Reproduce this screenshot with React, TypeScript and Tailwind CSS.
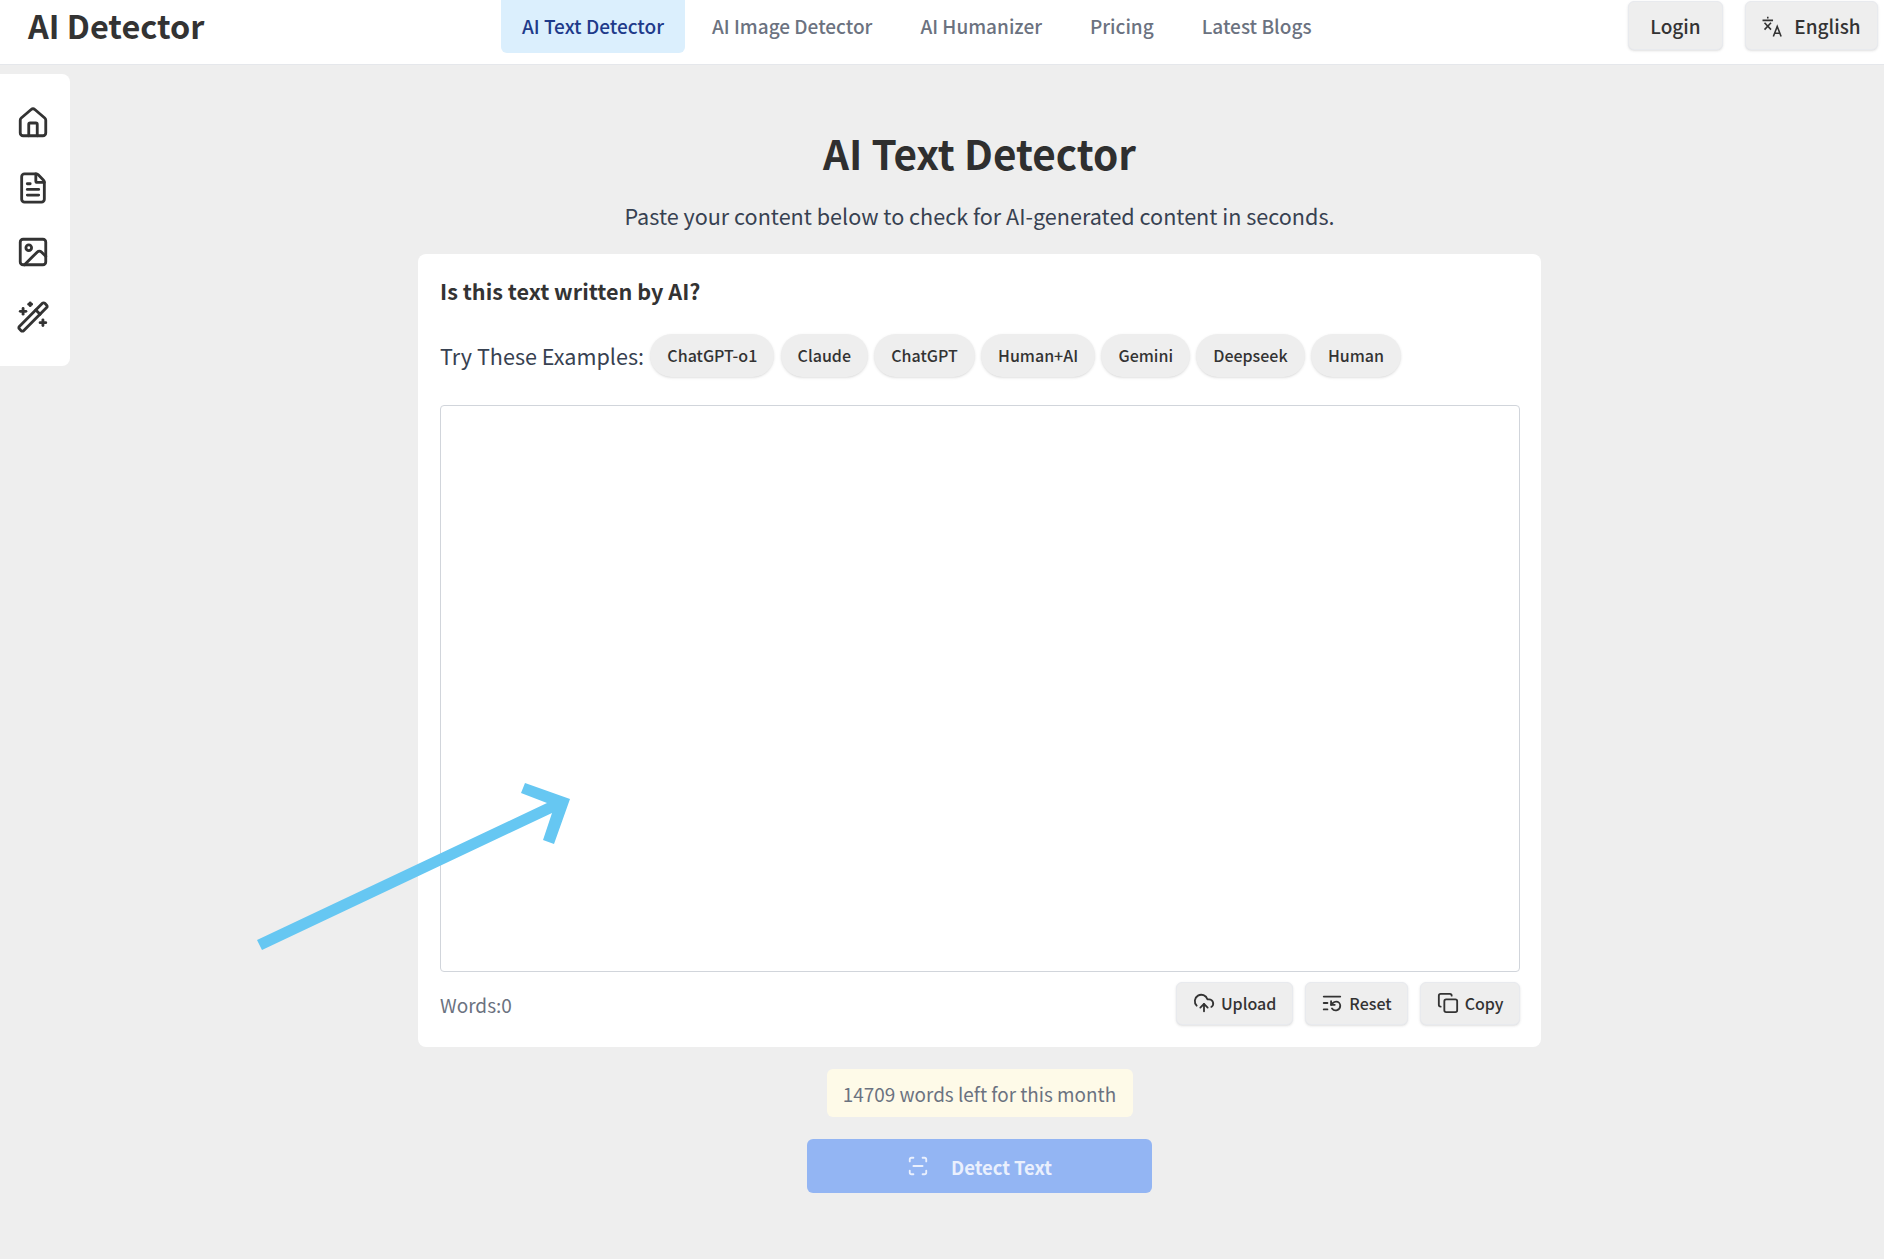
import { Copy, CloudUpload, FileText, House, Image, ListRestart, ScanLine, WandSparkles } from "lucide-react";

const tabs = ["AI Image Detector", "AI Humanizer", "Pricing", "Latest Blogs"];
const examples = ["ChatGPT-o1", "Claude", "ChatGPT", "Human+AI", "Gemini", "Deepseek", "Human"];

function TranslateIcon() {
  return (
    <svg viewBox="0 0 20 20" className="h-[21px] w-[21px]" fill="none" stroke="currentColor" strokeWidth="1.5">
      <path d="M0.5 4.2h10M5.5 0.8v1.6M2.4 6.4l6.2 6.6M8.6 6.4l-6.2 6.6" />
      <path d="M10.8 19.5l3.7-9.5 3.7 9.5M12 16.5h5" />
    </svg>
  );
}

function ToolButton({ icon, label }: { icon: React.ReactNode; label: string }) {
  return (
    <button className="flex h-[43px] items-center justify-center gap-[6px] rounded-md border border-[#e8eaee] bg-[#eeeeee] px-[15.5px] pb-[2px] text-[16px] font-medium text-[#333] shadow-sm">
      {icon}
      {label}
    </button>
  );
}

export default function App() {
  return (
    <div className="relative flex min-h-[1259px] flex-col overflow-hidden bg-[#eeeeee] font-['Noto_Sans_CJK_SC','Noto_Sans',sans-serif] text-[#333]">
      <header className="flex h-[65px] items-start border-b border-[#e5e7eb] bg-white">
        <div className="flex h-[51px] w-[501px] items-center pl-[28px] text-[32.4px] font-bold text-[#333]">AI Detector</div>
        <nav className="flex gap-[6px] text-[19px] font-medium text-[#6b7280]">
          <a className="flex h-[53px] items-center rounded-b-md bg-[#dbeffd] px-[21px] text-[#1e3a8a]">AI Text Detector</a>
          {tabs.map((t) => (
            <a key={t} className="flex h-[53px] items-center px-[21px]">
              {t}
            </a>
          ))}
        </nav>
        <div className="ml-auto flex gap-[22px] pt-[1px] pr-[6px] text-[19px] font-medium text-[#333]">
          <button className="h-[49px] w-[95px] rounded-md border border-[#e8eaee] bg-[#eeeeee] pt-[2px] shadow-sm">Login</button>
          <button className="flex h-[49px] w-[133px] items-center justify-center gap-[11px] rounded-md border border-[#e8eaee] bg-[#eeeeee] pt-[2px] shadow-sm">
            <TranslateIcon />
            English
          </button>
        </div>
      </header>

      <div className="flex flex-1 items-start">
        <aside className="mt-[9px] flex h-[292px] w-[70px] flex-col items-center gap-[30.6px] rounded-r-lg bg-white pt-[32px] pr-[4px] text-[#333]">
          <House className="h-[34px] w-[34px]" strokeWidth={2} />
          <FileText className="h-[34px] w-[34px]" strokeWidth={2} />
          <Image className="h-[34px] w-[34px]" strokeWidth={2} />
          <WandSparkles className="h-[34px] w-[34px]" strokeWidth={2} />
        </aside>

        <main className="ml-[348px] flex w-[1123px] flex-col items-center">
          <h1 className="mt-[60px] text-[40.5px] leading-[56px] font-bold text-[#2f2f2f]">AI Text Detector</h1>
          <p className="mt-[19px] text-[21.6px] leading-[32px] text-[#374151]">Paste your content below to check for AI-generated content in seconds.</p>

          <section className="mt-[22px] h-[793px] w-full rounded-lg bg-white pt-[21px] pr-[21px] pl-[22px]">
            <h2 className="text-[21.6px] leading-[32px] font-bold text-[#333]">Is this text written by AI?</h2>
            <div className="mt-[27px] flex items-center gap-[6.3px]">
              <span className="pt-[2px] text-[21.6px] text-[#374151]">Try These Examples:</span>
              {examples.map((e) => (
                <button key={e} className="h-[43px] rounded-full bg-[#eeeeee] px-[17px] pb-[2px] text-[16px] font-medium text-[#333] shadow-sm">
                  {e}
                </button>
              ))}
            </div>
            <textarea className="mt-[28px] block h-[567px] w-full resize-none rounded border border-[#d1d5db] bg-white" />
            <div className="mt-[10px] flex items-center justify-between">
              <span className="pt-[4px] text-[19px] text-[#6b7280]">Words:0</span>
              <div className="flex gap-[12px]">
                <ToolButton icon={<CloudUpload className="h-[22px] w-[22px]" />} label="Upload" />
                <ToolButton icon={<ListRestart className="h-[22px] w-[22px]" />} label="Reset" />
                <ToolButton icon={<Copy className="h-[22px] w-[22px]" />} label="Copy" />
              </div>
            </div>
          </section>

          <div className="mt-[22px] flex h-[48px] w-[306px] items-center justify-center rounded-md bg-[#fefae8] pt-[2px] text-[18.9px] text-[#6b7280]">14709 words left for this month</div>
          <button className="mt-[22px] flex h-[54px] w-[345px] items-center justify-center gap-[22px] rounded-md bg-[#93b5f3] text-[18.4px] font-bold text-[#eaf0fd]">
            <ScanLine className="h-[22px] w-[22px]" />
            <span className="pt-[3px]">Detect Text</span>
          </button>
        </main>
      </div>

      {/* annotation arrow drawn over the page */}
      <svg className="absolute top-[780px] left-[250px] h-[180px] w-[330px]" viewBox="250 780 330 180">
        <path d="M257 940L262 950L552 813L543 840L554 844L570 799L525 783L521 793L547 803Z" fill="#66c7f2" />
      </svg>
    </div>
  );
}
